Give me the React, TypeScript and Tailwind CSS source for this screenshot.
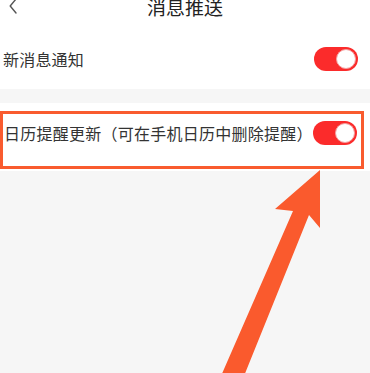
import React from 'react';

const Toggle = () => (
  <div className="w-[44px] h-[24px] rounded-full bg-[#fb2b2b] flex items-center justify-end pr-[2px] shrink-0">
    <div className="w-[20px] h-[20px] rounded-full bg-white border border-[#f3a0a0]" />
  </div>
);

const App = () => {
  return (
    <div className="relative w-[370px] h-[373px] overflow-hidden bg-[#f6f6f6] font-['Noto_Sans_CJK_SC',sans-serif] text-[#333]">
      {/* Header (partly scrolled off) */}
      <header className="-mt-[17px] h-[46px] bg-white grid grid-cols-[1fr_auto_1fr] items-center">
        <div className="pl-[9px] flex items-center">
          <svg width="8" height="16" viewBox="0 0 8 16" fill="none">
            <path d="M7 1 L1.2 8 L7 15" stroke="#555" strokeWidth="1.4" strokeLinecap="round" strokeLinejoin="round" />
          </svg>
        </div>
        <h1 className="text-[19px] leading-none text-[#222]">消息推送</h1>
        <div />
      </header>

      {/* Row 1 */}
      <div className="h-[60px] bg-white flex items-center justify-between pl-[3px] pr-[12px]">
        <span className="text-[16px] tracking-[0.2px]">新消息通知</span>
        <Toggle />
      </div>

      <div className="h-[14px]" />

      {/* Row 2 with highlight box */}
      <div className="bg-white pt-[8px] pb-[2px]">
        <div className="w-[364px] h-[58px] border-[3px] border-[#f95b2f] pt-[7px] pl-[1px] pr-[4px]">
          <div className="h-[24px] flex items-center justify-between">
            <span className="text-[16px] tracking-[0.25px] whitespace-nowrap">日历提醒更新（可在手机日历中删除提醒）</span>
            <Toggle />
          </div>
        </div>
      </div>

      {/* Arrow annotation */}
      <svg className="absolute left-0 top-0 pointer-events-none" width="370" height="373" viewBox="0 0 370 373">
        <polygon points="320,170 320,228 309,215 244,376 221,376 293,211 275,209" fill="#fa5a2d" />
      </svg>
    </div>
  );
};

export default App;
